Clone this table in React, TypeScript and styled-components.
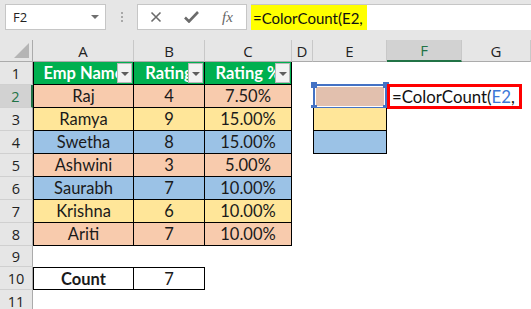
import styled, { createGlobalStyle } from "styled-components";

const GlobalStyle = createGlobalStyle`
  html, body {
    margin: 0;
    padding: 0;
    background: #ffffff;
  }
  body {
    width: 531px;
    height: 309px;
    overflow: hidden;
    font-family: Lato, "Open Sans", sans-serif;
  }
`;

const colors = {
  peach: "#f8cbad",
  yellow: "#ffe699",
  blue: "#9bc2e6",
  green: "#00b050",
  excel: "#217346",
  chrome: "#e6e6e6",
  chromeActive: "#d2d2d2",
  line: "#c6c6c6",
};

const Window = styled.div`
  width: 531px;
  height: 309px;
  display: flex;
  flex-direction: column;
  overflow: hidden;
  background: #ffffff;
`;

/* ---------- formula bar ---------- */

const Toolbar = styled.div`
  height: 40px;
  flex-shrink: 0;
  box-sizing: border-box;
  padding: 4px 0 0 5px;
  display: flex;
  align-items: flex-start;
  background: ${colors.chrome};
`;

const NameBox = styled.div`
  width: 101px;
  height: 26px;
  box-sizing: border-box;
  border: 1px solid ${colors.line};
  background: #ffffff;
  display: flex;
  align-items: center;
  justify-content: space-between;
  padding: 0 6px 0 7px;
  font-family: "Open Sans", sans-serif;
  font-size: 13px;
  color: #222;
`;

const Caret = styled.span`
  width: 0;
  height: 0;
  border-left: 4px solid transparent;
  border-right: 4px solid transparent;
  border-top: 4px solid #6f6f6f;
`;

const Grip = styled.div`
  width: 31px;
  height: 26px;
  display: flex;
  flex-direction: column;
  align-items: center;
  justify-content: center;
  gap: 2px;
`;

const GripDot = styled.span`
  width: 2px;
  height: 2px;
  background: #a8a8a8;
`;

const FuncBox = styled.div`
  width: 110px;
  height: 26px;
  box-sizing: border-box;
  border: 1px solid ${colors.line};
  background: #ffffff;
  display: flex;
  align-items: center;
  padding-left: 12px;
  gap: 22px;
`;

const Fx = styled.span`
  font-family: "Liberation Serif", serif;
  font-style: italic;
  font-size: 15px;
  color: #666;
  margin-left: 1px;
`;

const FormulaBar = styled.div`
  flex: 1;
  height: 26px;
  margin-left: 4px;
  box-sizing: border-box;
  border-top: 1px solid ${colors.line};
  background: #ffffff;
  display: flex;
`;

const FormulaText = styled.div`
  width: 116px;
  background: #ffff00;
  display: flex;
  align-items: center;
  padding-left: 2px;
  box-sizing: border-box;
  font-size: 15px;
  color: #111;
  white-space: nowrap;
`;

/* ---------- sheet ---------- */

const Sheet = styled.div`
  display: grid;
  grid-template-columns: 33px 101px 71px 87px 21px 74px 75px 1fr;
  grid-template-rows: 22px repeat(8, 23px) 21px 23px 23px;
`;

const Corner = styled.div`
  background: ${colors.chrome};
  border-right: 1px solid #ababab;
  border-bottom: 1px solid #ababab;
  box-sizing: border-box;
  display: flex;
  align-items: flex-end;
  justify-content: flex-end;
  padding: 0 3px 3px 0;
`;

const ColHead = styled.div<{ $active?: boolean }>`
  background: ${(p) => (p.$active ? colors.chromeActive : colors.chrome)};
  border-right: 1px solid #c8c8c8;
  border-bottom: ${(p) => (p.$active ? `2px solid ${colors.excel}` : "1px solid #ababab")};
  box-sizing: border-box;
  display: flex;
  align-items: center;
  justify-content: center;
  font-family: "Open Sans", sans-serif;
  font-size: 15px;
  color: ${(p) => (p.$active ? colors.excel : "#222")};
`;

const RowHead = styled.div<{ $active?: boolean }>`
  background: ${(p) => (p.$active ? colors.chromeActive : colors.chrome)};
  border-right: ${(p) => (p.$active ? `2px solid ${colors.excel}` : "1px solid #ababab")};
  border-bottom: 1px solid #d0d0d0;
  box-sizing: border-box;
  display: flex;
  align-items: center;
  justify-content: center;
  font-family: "Open Sans", sans-serif;
  font-size: 14.5px;
  color: ${(p) => (p.$active ? colors.excel : "#222")};
`;

const edge = (on: boolean) => (on ? "1px solid #000" : "0");

const Cell = styled.div<{ $fill?: string; $edges?: string; $bold?: boolean }>`
  position: relative;
  box-sizing: border-box;
  background: ${(p) => p.$fill || "#ffffff"};
  border-top: ${(p) => edge(!!p.$edges?.includes("t"))};
  border-right: ${(p) => edge(!!p.$edges?.includes("r"))};
  border-bottom: ${(p) => edge(!!p.$edges?.includes("b"))};
  border-left: ${(p) => edge(!!p.$edges?.includes("l"))};
  display: flex;
  align-items: center;
  justify-content: center;
  font-size: 16.5px;
  font-weight: ${(p) => (p.$bold ? 700 : 400)};
  color: #1a1a1a;
  white-space: nowrap;
`;

const HeadCell = styled(Cell)`
  background: ${colors.green};
  color: #ffffff;
  font-weight: 700;
  overflow: hidden;
`;

const FilterButton = styled.span`
  position: absolute;
  right: 1px;
  top: 1px;
  bottom: 1px;
  width: 15px;
  box-sizing: border-box;
  border: 1px solid #b8b8b8;
  background: #f2f2f2;
  display: flex;
  align-items: center;
  justify-content: center;

  &::after {
    content: "";
    width: 0;
    height: 0;
    margin-top: 2px;
    border-left: 4px solid transparent;
    border-right: 4px solid transparent;
    border-top: 4px solid #5e5e5e;
  }
`;

const Selection = styled.span`
  position: absolute;
  top: -2px;
  left: -1px;
  right: -1px;
  bottom: -2px;
  border: 2px solid #4472c4;
  box-shadow: inset 0 0 0 1px #ffffff;
  pointer-events: none;
`;

const Handle = styled.span<{ $v: "top" | "bottom"; $h: "left" | "right" }>`
  position: absolute;
  width: 6px;
  height: 6px;
  background: #4472c4;
  ${(p) => p.$v}: -4px;
  ${(p) => p.$h}: -4px;
`;

const OverflowCell = styled.div`
  grid-column: span 2;
  display: flex;
  align-items: center;
  position: relative;
  z-index: 2;
`;

const RedBox = styled.div`
  height: 25px;
  margin-top: -1px;
  box-sizing: border-box;
  border: 3px solid #ff0000;
  background: #ffffff;
  display: flex;
  align-items: center;
  padding: 0 4px 0 2px;
  font-size: 16.8px;
  color: #111;
  white-space: nowrap;
`;

const Ref = styled.span`
  color: #3c78d8;
`;

type Row = { name: string; rating: number; pct: string; fill: string };

const rows: Row[] = [
  { name: "Raj", rating: 4, pct: "7.50%", fill: colors.peach },
  { name: "Ramya", rating: 9, pct: "15.00%", fill: colors.yellow },
  { name: "Swetha", rating: 8, pct: "15.00%", fill: colors.blue },
  { name: "Ashwini", rating: 3, pct: "5.00%", fill: colors.peach },
  { name: "Saurabh", rating: 7, pct: "10.00%", fill: colors.blue },
  { name: "Krishna", rating: 6, pct: "10.00%", fill: colors.yellow },
  { name: "Ariti", rating: 7, pct: "10.00%", fill: colors.peach },
];

const swatches = [colors.peach, colors.yellow, colors.blue];

const letters = ["A", "B", "C", "D", "E", "F", "G"];

const CornerMark = () => (
  <svg width="15" height="15" viewBox="0 0 15 15">
    <polygon points="15,0 15,15 0,15" fill="#b5b5b5" />
  </svg>
);

const CloseIcon = () => (
  <svg width="12" height="12" viewBox="0 0 12 12">
    <path d="M1.5 1.5 L10.5 10.5 M10.5 1.5 L1.5 10.5" stroke="#6b6b6b" strokeWidth="1.6" fill="none" />
  </svg>
);

const CheckIcon = () => (
  <svg width="15" height="12" viewBox="0 0 15 12">
    <path d="M1 6.5 L5 10.5 L14 1" stroke="#6b6b6b" strokeWidth="2.6" fill="none" />
  </svg>
);

const EmptyCells = ({ count, prefix }: { count: number; prefix: string }) => (
  <>
    {Array.from({ length: count }, (_, i) => (
      <Cell key={`${prefix}${i}`} />
    ))}
  </>
);

const App = () => {
  return (
    <Window>
      <GlobalStyle />
      <Toolbar>
        <NameBox>
          F2
          <Caret />
        </NameBox>
        <Grip>
          <GripDot />
          <GripDot />
          <GripDot />
        </Grip>
        <FuncBox>
          <CloseIcon />
          <CheckIcon />
          <Fx>fx</Fx>
        </FuncBox>
        <FormulaBar>
          <FormulaText>=ColorCount(E2,</FormulaText>
        </FormulaBar>
      </Toolbar>

      <Sheet>
        <Corner>
          <CornerMark />
        </Corner>
        {letters.map((l) => (
          <ColHead key={l} $active={l === "F"}>
            {l}
          </ColHead>
        ))}

        {/* row 1: table header */}
        <RowHead>1</RowHead>
        <HeadCell $edges="rbl">
          Emp Name
          <FilterButton />
        </HeadCell>
        <HeadCell $edges="rb">
          Rating
          <FilterButton />
        </HeadCell>
        <HeadCell $edges="rb">
          Rating %
          <FilterButton />
        </HeadCell>
        <EmptyCells count={4} prefix="r1" />

        {rows.map((r, i) => {
          const n = i + 2;
          const swatch = swatches[i];
          return [
            <RowHead key={`h${n}`} $active={n === 2}>
              {n}
            </RowHead>,
            <Cell key={`a${n}`} $fill={r.fill} $edges="rbl">
              {r.name}
            </Cell>,
            <Cell key={`b${n}`} $fill={r.fill} $edges="rb">
              {r.rating}
            </Cell>,
            <Cell key={`c${n}`} $fill={r.fill} $edges="rb">
              {r.pct}
            </Cell>,
            <Cell key={`d${n}`} />,
            swatch ? (
              <Cell
                key={`e${n}`}
                $fill={n === 2 ? "#e2c0ae" : swatch}
                $edges={n === 2 ? "trbl" : "rbl"}
              >
                {n === 2 && (
                  <Selection>
                    <Handle $v="top" $h="left" />
                    <Handle $v="top" $h="right" />
                    <Handle $v="bottom" $h="left" />
                    <Handle $v="bottom" $h="right" />
                  </Selection>
                )}
              </Cell>
            ) : (
              <Cell key={`e${n}`} />
            ),
            n === 2 ? (
              <OverflowCell key={`f${n}`}>
                <RedBox>
                  =ColorCount(<Ref>E2</Ref>,
                </RedBox>
              </OverflowCell>
            ) : (
              <Cell key={`f${n}`} />
            ),
            n === 2 ? null : <Cell key={`g${n}`} />,
          ];
        })}

        <RowHead>9</RowHead>
        <EmptyCells count={7} prefix="r9" />

        <RowHead>10</RowHead>
        <Cell $edges="trbl" $bold>
          Count
        </Cell>
        <Cell $edges="trb">7</Cell>
        <EmptyCells count={5} prefix="r10" />

        <RowHead>11</RowHead>
        <EmptyCells count={7} prefix="r11" />
      </Sheet>
    </Window>
  );
};

export default App;
